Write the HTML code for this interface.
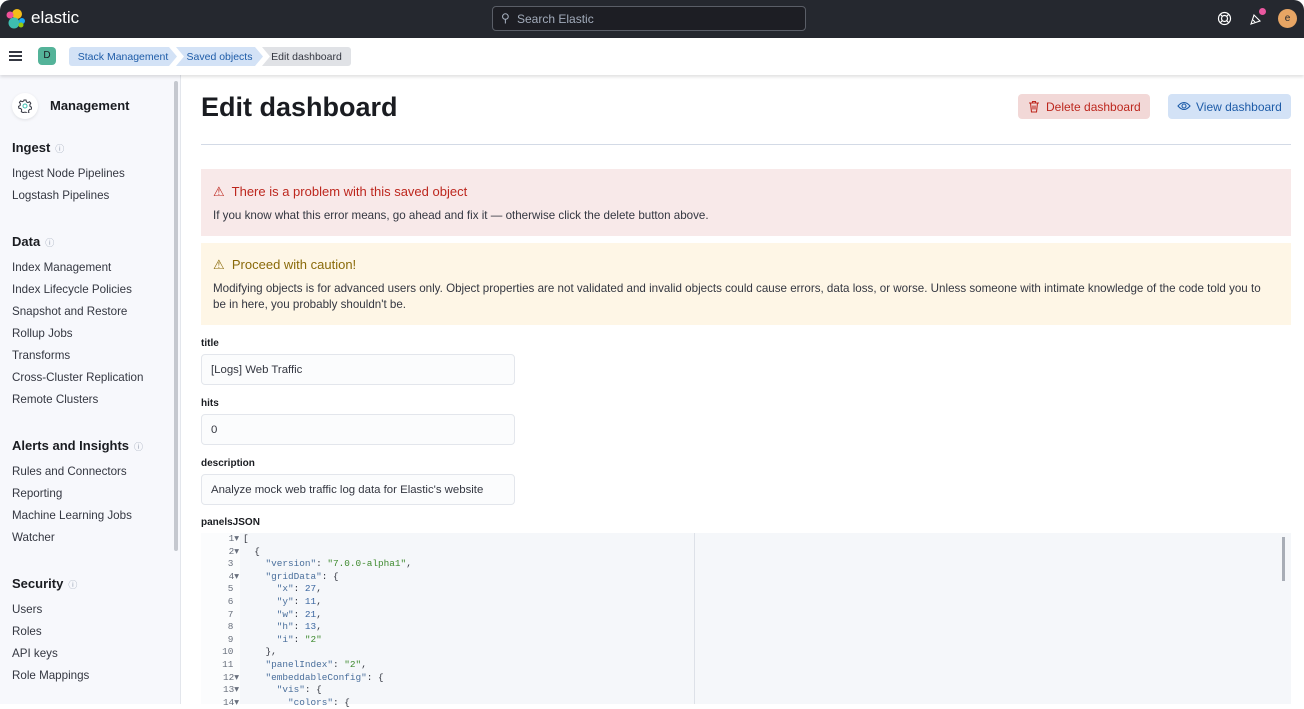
<!DOCTYPE html>
<html><head><meta charset="utf-8"><style>
*{box-sizing:border-box;margin:0;padding:0}
body{width:1304px;height:704px;overflow:hidden;background:#fff;font-family:"Liberation Sans",sans-serif;color:#343741;position:relative}
.top{position:absolute;left:0;top:0;width:1304px;height:38px;background:#25282f;border-radius:10px 10px 0 0}
.search{position:absolute;left:492px;top:6px;width:314px;height:25px;border:1px solid #5a5e67;border-radius:4px;background:#1d1e24;color:#a2abba;font-size:12px;padding:5px 0 0 24px}
.bar2{position:absolute;left:0;top:38px;width:1304px;height:37px;background:#fff;box-shadow:0 2px 3px rgba(0,0,0,.12);z-index:2}
.bc{position:absolute;top:9px;height:19px;font-size:10.5px;padding:4px 0 0;text-align:center}
.side{position:absolute;left:0;top:75px;width:181px;height:629px;background:#f7f8fc;border-right:1px solid #e3e6ec}
.side .sb{position:absolute;left:174px;top:6px;width:4px;height:470px;background:#c5c8cf;border-radius:2px}
.h{position:absolute;left:12px;font-size:13px;font-weight:bold;color:#1a1c21}
.h i{font-style:normal;font-weight:normal;font-size:9px;color:#98a2b3;margin-left:5px}
.it{position:absolute;left:12px;font-size:11.6px;color:#343741}
.main{position:absolute;left:201px}
.alert{position:absolute;left:201px;width:1090px}
.code{position:absolute;left:201px;top:533px;width:1090px;height:171px;background:#f5f7fa}
.ln{position:absolute;font-family:"Liberation Mono",monospace;font-size:9.4px;line-height:12.6px}
.k{color:#4a6f9c}.s{color:#3e8a2e}.n{color:#3a66a0}
</style></head><body>
<div class="top">
 <svg style="position:absolute;left:6px;top:8px" width="20" height="21" viewBox="0 0 20 21"><circle cx="11" cy="6" r="5" fill="#f4bd19"/><circle cx="8" cy="15" r="5.5" fill="#3ebeb0"/><circle cx="4" cy="7" r="3.5" fill="#ef5098"/><circle cx="16" cy="13" r="3" fill="#1ba9f5"/><circle cx="15" cy="17" r="2.5" fill="#93c90e"/></svg>
 <div style="position:absolute;left:31px;top:8px;color:#fff;font-size:17px">elastic</div>
 <div class="search"><span style="position:absolute;left:8px;top:4px;font-size:12px">&#9906;</span>Search Elastic</div>
 <svg style="position:absolute;left:1217px;top:11px" width="15" height="15" viewBox="0 0 15 15" fill="none" stroke="#fff" stroke-width="1.2"><circle cx="7.5" cy="7.5" r="6"/><circle cx="7.5" cy="7.5" r="3"/><path d="M3.3 3.3l2 2M11.7 3.3l-2 2M3.3 11.7l2-2M11.7 11.7l-2-2"/></svg>
 <svg style="position:absolute;left:1249px;top:12px" width="14" height="14" viewBox="0 0 14 14" fill="none" stroke="#fff" stroke-width="1.1"><path d="M2 12L5 3l6 6z"/><path d="M4 8l2 2"/></svg>
 <div style="position:absolute;left:1259px;top:8px;width:7px;height:7px;border-radius:50%;background:#e9579f"></div>
 <div style="position:absolute;left:1278px;top:9px;width:19px;height:19px;border-radius:50%;background:#e7a564;color:#25282f;font-size:10px;text-align:center;line-height:19px">e</div>
</div>
<div class="bar2">
 <div style="position:absolute;left:9px;top:13px;width:13px;height:2px;background:#343741;box-shadow:0 4px 0 #343741,0 8px 0 #343741"></div>
 <div style="position:absolute;left:38px;top:9px;width:18px;height:18px;border-radius:4px;background:#54b399;color:#1a1c21;font-size:10px;text-align:center;line-height:18px">D</div>
 <div class="bc" style="left:69px;width:108px;background:#d3e2f6;color:#1e5ca8;border-radius:3px 0 0 3px;clip-path:polygon(0 0,100px 0,108px 50%,100px 100%,0 100%)">Stack Management</div>
 <div class="bc" style="left:176px;width:87px;background:#d3e2f6;color:#1e5ca8;clip-path:polygon(0 0,79px 0,87px 50%,79px 100%,0 100%,8px 50%)">Saved objects</div>
 <div class="bc" style="left:262px;width:89px;background:#e0e2e6;color:#343741;border-radius:0 3px 3px 0;clip-path:polygon(0 0,100% 0,100% 100%,0 100%,8px 50%)">Edit dashboard</div>
</div>
<div class="side"><div class="sb"></div>
 <div style="position:absolute;left:12px;top:18px;width:26px;height:26px;border-radius:50%;background:#fff;box-shadow:0 1px 3px rgba(0,0,0,.1)"><svg style="position:absolute;left:6px;top:6px" width="14" height="14" viewBox="0 0 14 14" fill="none" stroke="#343741" stroke-width="1"><path d="M6 1h2l.4 1.8 1.5.8 1.7-.8 1.2 1.5-1 1.5.3 1.7 1.6.8-.4 1.9-1.8.2-1 1.4.4 1.8-1.7 1-1.3-1.3H6.3L5 13.6 3.3 12.7l.4-1.8-1-1.4-1.8-.2-.4-1.9 1.6-.8.3-1.7-1-1.5 1.2-1.5 1.7.8 1.5-.8z"/><circle cx="7" cy="7" r="2" stroke="#3ebeb0"/></svg></div>
 <div style="position:absolute;left:50px;top:23px;font-size:13px;font-weight:bold;color:#1a1c21">Management</div>
 <div class="h" style="top:65px">Ingest<i>&#9432;</i></div>
 <div class="it" style="top:92px">Ingest Node Pipelines</div><div class="it" style="top:114px">Logstash Pipelines</div>
 <div class="h" style="top:159px">Data<i>&#9432;</i></div>
 <div class="it" style="top:186px">Index Management</div><div class="it" style="top:208px">Index Lifecycle Policies</div><div class="it" style="top:230px">Snapshot and Restore</div><div class="it" style="top:252px">Rollup Jobs</div><div class="it" style="top:274px">Transforms</div><div class="it" style="top:296px">Cross-Cluster Replication</div><div class="it" style="top:318px">Remote Clusters</div>
 <div class="h" style="top:363px">Alerts and Insights<i>&#9432;</i></div>
 <div class="it" style="top:390px">Rules and Connectors</div><div class="it" style="top:412px">Reporting</div><div class="it" style="top:434px">Machine Learning Jobs</div><div class="it" style="top:456px">Watcher</div>
 <div class="h" style="top:501px">Security<i>&#9432;</i></div>
 <div class="it" style="top:528px">Users</div><div class="it" style="top:550px">Roles</div><div class="it" style="top:572px">API keys</div><div class="it" style="top:594px">Role Mappings</div>
</div>
<div class="main" style="top:92px;font-size:27px;font-weight:bold;color:#1a1c21">Edit dashboard</div>
<div style="position:absolute;left:1018px;top:94px;width:132px;height:25px;background:#f2d8d7;border-radius:4px;color:#bd271e;font-size:12px;padding:6px 0 0 28px"><svg style="position:absolute;left:10px;top:6px" width="12" height="13" viewBox="0 0 12 13" fill="none" stroke="#bd271e" stroke-width="1.1"><path d="M1 3h10M4.5 3V1.5h3V3M2.5 3l1 9h5l1-9M5 5.5v4M7 5.5v4"/></svg>Delete dashboard</div>
<div style="position:absolute;left:1168px;top:94px;width:123px;height:25px;background:#d3e2f6;border-radius:4px;color:#1e5ca8;font-size:12px;padding:6px 0 0 28px"><svg style="position:absolute;left:9px;top:7px" width="14" height="10" viewBox="0 0 14 10" fill="none" stroke="#1e5ca8" stroke-width="1.1"><path d="M1 5q6-7 12 0q-6 7-12 0z"/><circle cx="7" cy="5" r="2"/></svg>View dashboard</div>
<div style="position:absolute;left:201px;top:144px;width:1090px;height:1px;background:#d3dae6"></div>
<div class="alert" style="top:169px;height:67px;background:#f8e9e9">
 <div style="position:absolute;left:12px;top:15px;color:#bd271e;font-size:13px">&#9888;&nbsp; There is a problem with this saved object</div>
 <div style="position:absolute;left:12px;top:40px;font-size:11.6px">If you know what this error means, go ahead and fix it — otherwise click the delete button above.</div>
</div>
<div class="alert" style="top:243px;height:82px;background:#fef6e6">
 <div style="position:absolute;left:12px;top:14px;color:#8a6a0a;font-size:13px">&#9888;&nbsp; Proceed with caution!</div>
 <div style="position:absolute;left:12px;top:38px;font-size:11.6px;line-height:16px;width:1060px">Modifying objects is for advanced users only. Object properties are not validated and invalid objects could cause errors, data loss, or worse. Unless someone with intimate knowledge of the code told you to be in here, you probably shouldn't be.</div>
</div>
<div class="main" style="top:338px;font-size:10px;font-weight:bold;color:#1a1c21">title</div>
<div class="main" style="top:354px;width:314px;height:31px;background:#fbfcfd;border:1px solid #e3e6ec;border-radius:4px;font-size:11.4px;padding:9px 0 0 9px">[Logs] Web Traffic</div>
<div class="main" style="top:398px;font-size:10px;font-weight:bold;color:#1a1c21">hits</div>
<div class="main" style="top:414px;width:314px;height:31px;background:#fbfcfd;border:1px solid #e3e6ec;border-radius:4px;font-size:11.4px;padding:9px 0 0 9px">0</div>
<div class="main" style="top:458px;font-size:10px;font-weight:bold;color:#1a1c21">description</div>
<div class="main" style="top:474px;width:314px;height:31px;background:#fbfcfd;border:1px solid #e3e6ec;border-radius:4px;font-size:11.4px;padding:9px 0 0 9px">Analyze mock web traffic log data for Elastic's website</div>
<div class="main" style="top:517px;font-size:10px;font-weight:bold;color:#1a1c21">panelsJSON</div>
<div class="code">
 <div style="position:absolute;left:0;top:0;width:39px;height:171px;background:#fbfcfd"></div>
 <div style="position:absolute;left:493px;top:0;width:1px;height:171px;background:#dde1e8"></div>
 <div style="position:absolute;left:1081px;top:4px;width:3px;height:44px;background:#a8adb6"></div>
 <pre class="ln" style="left:0;top:0;width:38px;text-align:right;color:#69707d"> 1▾
 2▾
 3 
 4▾
 5 
 6 
 7 
 8 
 9 
10 
11 
12▾
13▾
14▾</pre>
 <pre class="ln" style="left:42px;top:0;color:#343741">[
  {
    <span class="k">"version"</span>: <span class="s">"7.0.0-alpha1"</span>,
    <span class="k">"gridData"</span>: {
      <span class="k">"x"</span>: <span class="n">27</span>,
      <span class="k">"y"</span>: <span class="n">11</span>,
      <span class="k">"w"</span>: <span class="n">21</span>,
      <span class="k">"h"</span>: <span class="n">13</span>,
      <span class="k">"i"</span>: <span class="s">"2"</span>
    },
    <span class="k">"panelIndex"</span>: <span class="s">"2"</span>,
    <span class="k">"embeddableConfig"</span>: {
      <span class="k">"vis"</span>: {
        <span class="k">"colors"</span>: {</pre>
</div>
</body></html>
